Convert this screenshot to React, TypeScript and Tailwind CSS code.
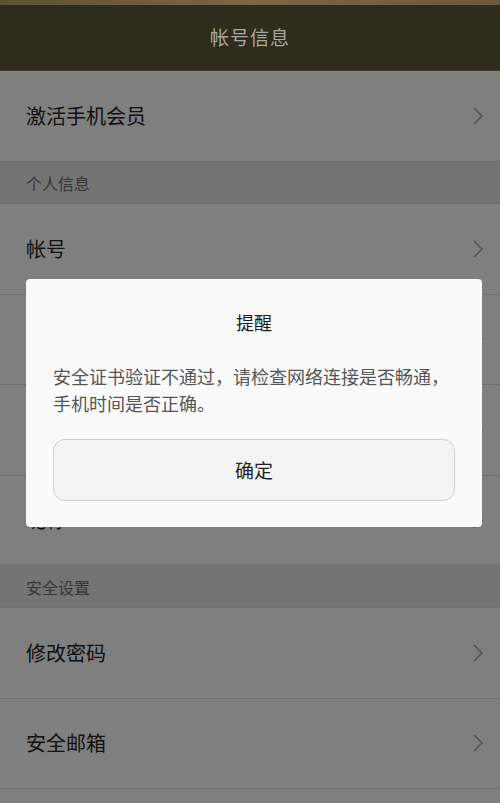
const rowsA = ["帐号", "头像", "姓名", "昵称"];
const rowsB = ["修改密码", "安全邮箱"];

function Chevron() {
  return (
    <svg width="12" height="20" viewBox="0 0 12 20" fill="none" className="shrink-0">
      <polyline points="2,2 10,10 2,18" stroke="#9a9a9a" strokeWidth="1.3" />
    </svg>
  );
}

function Row({ label, first }: { label: string; first?: boolean }) {
  return (
    <div
      className={`flex items-center justify-between pl-[26px] pr-[16px] border-b border-[#dcdcdc] box-border ${
        first ? "h-[91px]" : "h-[90.5px]"
      }`}
    >
      <span className="text-[20px] text-[#222]">{label}</span>
      <Chevron />
    </div>
  );
}

function Section({ label }: { label: string }) {
  return (
    <div className="h-[42px] flex items-center pl-[26px] bg-[#e8e8e8] border-b border-[#dcdcdc] box-border">
      <span className="text-[16px] text-[#6e6e6e]">{label}</span>
    </div>
  );
}

export default function App() {
  return (
    <div
      className="relative w-[500px] h-[803px] overflow-hidden bg-white flex flex-col"
      style={{ fontFamily: '"Noto Sans CJK SC", "Noto Sans", sans-serif' }}
    >
      <div className="h-[5px] bg-gradient-to-r from-[#5e5034] via-[#7a6847] to-[#6a5a3c]" />
      <div className="h-[66px] flex items-center justify-center bg-[#2f2b1d] border-b border-[#3d3723]">
        <span className="text-[19px] text-[#a9a8a2] tracking-[1px]">帐号信息</span>
      </div>

      <div className="relative flex-1">
        <Row label="激活手机会员" first />
        <Section label="个人信息" />
        {rowsA.map((r) => (
          <Row key={r} label={r} />
        ))}
        <Section label="安全设置" />
        {rowsB.map((r) => (
          <Row key={r} label={r} />
        ))}
        {/* 遮罩 */}
        <div className="absolute inset-0 bg-black/50" />
      </div>

      {/* 对话框 */}
      <div className="absolute left-[26px] top-[279px] w-[456px] h-[248px] bg-[#fafafa] rounded-[4px] px-[27px] flex flex-col">
        <div className="pt-[30px] text-center text-[18px] leading-[26px] text-[#1a1a1a]">提醒</div>
        <p className="mt-[28px] text-[18px] leading-[27px] text-[#555] whitespace-nowrap">
          安全证书验证不通过，请检查网络连接是否畅通，
          <br />
          手机时间是否正确。
        </p>
        <button className="mt-[22px] h-[62px] w-full rounded-[12px] border border-[#cfcfcf] bg-[#f3f3f3] text-[19px] text-[#222]">
          确定
        </button>
      </div>
    </div>
  );
}
